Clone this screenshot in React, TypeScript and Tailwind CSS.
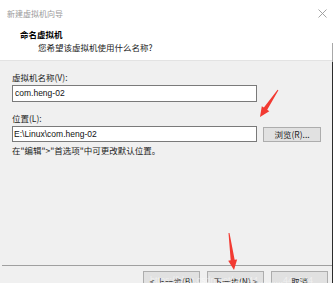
const font = "font-['Microsoft_YaHei','Noto_Sans_CJK_SC',sans-serif]";

function Arrow({ x1, y1, x2, y2 }: { x1: number; y1: number; x2: number; y2: number }) {
  // tapered red arrow from tail (x1,y1) to head (x2,y2)
  const dx = x2 - x1;
  const dy = y2 - y1;
  const len = Math.hypot(dx, dy);
  const ux = dx / len;
  const uy = dy / len;
  const px = -uy;
  const py = ux;
  const hb = 10; // head length
  const bx = x2 - ux * hb;
  const by = y2 - uy * hb;
  const pts = [
    [x1 + px * 0.5, y1 + py * 0.5],
    [bx + px * 2, by + py * 2],
    [bx + px * 4.5, by + py * 4.5],
    [x2, y2],
    [bx - px * 4.5, by - py * 4.5],
    [bx - px * 2, by - py * 2],
    [x1 - px * 0.5, y1 - py * 0.5],
  ]
    .map((p) => p.join(','))
    .join(' ');
  return <polygon points={pts} fill="#f23a32" />;
}

function Btn({ children, className = '' }: { children: React.ReactNode; className?: string }) {
  return (
    <div
      className={`h-[20px] flex items-center justify-center bg-[#e1e1e1] border border-[#adadad] text-[8.5px] text-[#222] ${className}`}
    >
      {children}
    </div>
  );
}

export default function App() {
  return (
    <div className={`relative w-[336px] h-[283px] overflow-hidden flex bg-white ${font}`}>
      <div className="w-[332px] flex flex-col">
        {/* Header */}
        <div className="h-[61px] bg-white border-b border-[#e3e3e3] relative">
          <div className="absolute left-[7px] top-[8px] text-[8px] text-[#9a9a9a]">新建虚拟机向导</div>
          <svg className="absolute left-[318px] top-[9px]" width="9" height="9" viewBox="0 0 9 9">
            <path d="M0.5 0.5 L8.5 8.5 M8.5 0.5 L0.5 8.5" stroke="#9a9a9a" strokeWidth="0.9" />
          </svg>
          <div className="absolute left-[20px] top-[28px] text-[8.5px] font-bold text-black">命名虚拟机</div>
          <div className="absolute left-[38px] top-[41px] text-[8.5px] text-[#222]">您希望该虚拟机使用什么名称?</div>
        </div>

        {/* Body */}
        <div className="flex-1 bg-[#f0f0f0] flex flex-col">
          <div className="pl-[12px] pt-[10px] flex flex-col">
            <div className="text-[8.5px] text-[#222] leading-[12px]">虚拟机名称(V):</div>
            <div className="mt-[2px] w-[245px] h-[17px] bg-white border border-[#7a7a7a] flex items-center pl-[2px] text-[8.5px] text-[#111] font-['Liberation_Sans',sans-serif]">
              com.heng-02
            </div>
            <div className="mt-[10px] text-[8.5px] text-[#222] leading-[12px]">位置(L):</div>
            <div className="mt-[2px] flex items-center gap-[6px]">
              <div className="w-[245px] h-[16px] bg-white border border-[#7a7a7a] flex items-center pl-[1px] text-[8.5px] text-[#111] font-['Liberation_Sans',sans-serif]">
                E:\Linux\com.heng-02
              </div>
              <div className="w-[58px] h-[15px] bg-[#e1e1e1] border border-[#adadad] flex items-center justify-center text-[8.5px] text-[#222]">
                浏览(R)...
              </div>
            </div>
            <div className="mt-[2px] text-[8.5px] text-[#222] leading-[12px]">在"编辑"&gt;"首选项"中可更改默认位置。</div>
          </div>
          <div className="flex-1" />
          <div className="ml-[2px] h-px bg-[#a0a0a0]" />
          <div className="h-[17px] pt-[5px] flex pl-[143px] gap-[7px]">
            <Btn className="w-[57px]">&lt; 上一步(B)</Btn>
            <Btn className="w-[57px]">下一步(N) &gt;</Btn>
            <Btn className="w-[57px]">取消</Btn>
          </div>
        </div>
      </div>
      <div className="w-px flex flex-col">
        <div className="h-[43px] bg-white" />
        <div className="h-[19px] bg-[#a8a8a8]" />
        <div className="flex-1 bg-[#2b2b2b]" />
      </div>
      <div className="w-[3px] bg-white" />

      {/* watermark */}
      <div className="absolute left-[150px] top-[274px] text-[9px] text-white/50 font-['Liberation_Sans',sans-serif] whitespace-nowrap">
        https://blog.csdn.net/qq_44..........44_204
      </div>

      <svg className="absolute left-0 top-0" width="336" height="283">
        <Arrow x1={278} y1={90} x2={260} y2={117} />
        <Arrow x1={229} y1={233} x2={234} y2={270} />
      </svg>
    </div>
  );
}
